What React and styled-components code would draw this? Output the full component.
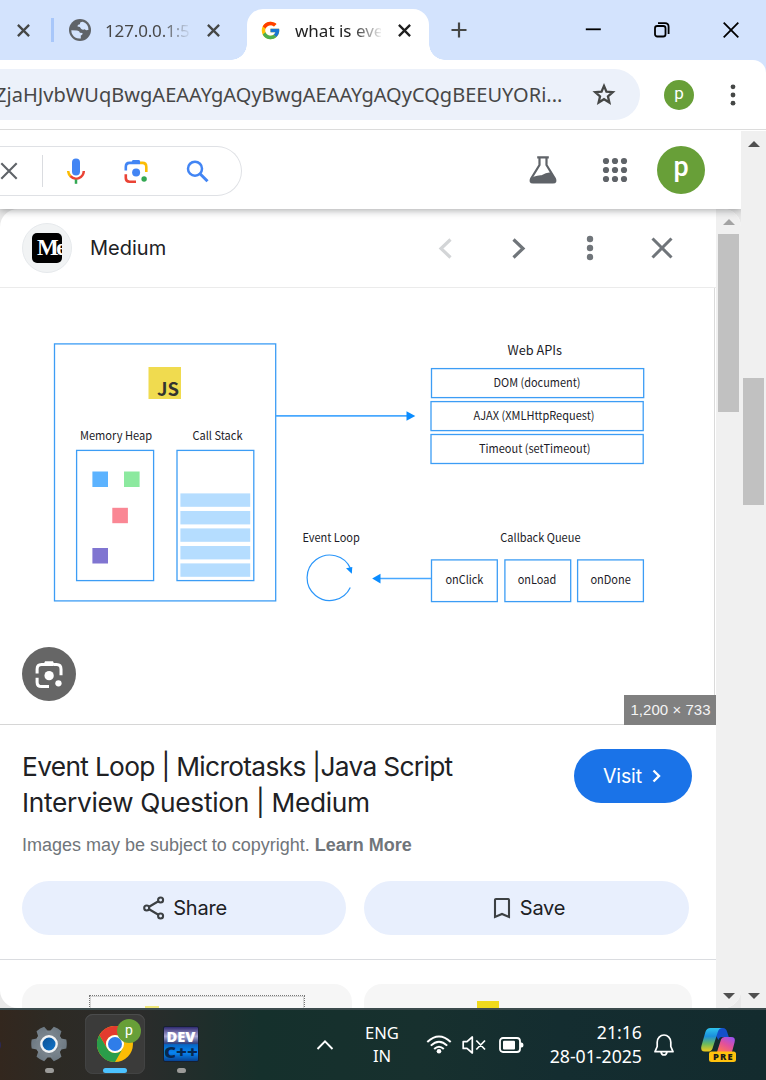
import React from "react";
import styled, { createGlobalStyle } from "styled-components";
import { FcGoogle } from "react-icons/fc";

const ui = '"Noto Sans", "Open Sans", sans-serif';
const product = 'Inter, Roboto, sans-serif';
const arial = '"Liberation Sans", Arial, sans-serif';

const Global = createGlobalStyle`
  * { box-sizing: border-box; }
  body { margin: 0; overflow: hidden; background: #fff; }
  svg { display: block; flex: none; }
`;

const Screen = styled.div`
  display: flex;
  flex-direction: column;
  width: 766px;
  height: 1080px;
  overflow: hidden;
  background: #fff;
`;

/* Label: one line of text */
const Label = styled.span`
  display: block;
  flex: none;
  white-space: pre;
  font-family: ${(p) => p.$font || ui};
  font-size: ${(p) => p.$size}px;
  line-height: ${(p) => p.$line || 24}px;
  letter-spacing: ${(p) => p.$track || 0}px;
  font-weight: ${(p) => p.$weight || 400};
  color: ${(p) => p.$color || "#202124"};
`;

const IconSlot = styled.div`
  display: flex;
  flex: none;
  margin-left: ${(p) => p.$left}px;
`;

/* Browser tabs */
const TabStrip = styled.div`
  display: flex;
  flex: none;
  align-items: flex-end;
  height: 60px;
  background: #d3e3fd;
`;
const IdleTabs = styled.div`
  display: flex;
  align-items: center;
  width: 247px;
  height: 60px;
  padding-left: 16px;
`;
const TabDivider = styled.div`
  width: 3px;
  height: 24px;
  margin: 0 15px 0 20px;
  background: #a8c7fa;
`;
const TabTitle = styled(Label)`
  width: ${(p) => p.$w}px;
  margin-left: 14px;
  margin-right: ${(p) => p.$after}px;
  padding-top: 2px;
  -webkit-mask-image: linear-gradient(to right, #000 66%, transparent 103%);
  mask-image: linear-gradient(to right, #000 66%, transparent 103%);
`;
const ActiveTab = styled.div`
  position: relative;
  display: flex;
  align-items: center;
  width: 182px;
  height: 51px;
  padding: 0 0 9px 13px;
  background: #fff;
  border-radius: 16px 16px 0 0;
  &::before, &::after {
    content: "";
    position: absolute;
    bottom: 0;
    width: 16px;
    height: 16px;
  }
  &::before { left: -16px; background: radial-gradient(circle at 0 0, transparent 15.5px, #fff 16px); }
  &::after { right: -16px; background: radial-gradient(circle at 100% 0, transparent 15.5px, #fff 16px); }
`;
const WindowControls = styled.div`
  display: flex;
  align-items: center;
  flex: 1;
  height: 60px;
  padding: 0 27px 0 22px;
`;
const ControlGroup = styled.div`
  display: flex;
  gap: 53px;
  margin-left: auto;
`;

/* Address bar */
const ToolbarBack = styled.div`
  flex: none;
  height: 71px;
  background: #d3e3fd;
`;
const Toolbar = styled.div`
  display: flex;
  align-items: center;
  height: 71px;
  padding-bottom: 2px;
  background: #fff;
  border-radius: 0 13px 0 0;
  box-shadow: inset 0 -1px 0 #fff, inset 0 -2px 0 #dcdcdc;
`;
const Omnibox = styled.div`
  display: flex;
  align-items: center;
  width: 640px;
  height: 51px;
  overflow: hidden;
  background: #ecf1fa;
  border-radius: 0 26px 26px 0;
`;
const UrlText = styled(Label)`
  width: 591px;
  margin-left: -5px;
  margin-right: 4px;
`;
const Avatar = styled.div`
  display: flex;
  justify-content: center;
  flex: none;
  width: ${(p) => p.$d}px;
  height: ${(p) => p.$d}px;
  border-radius: 50%;
  background: #689f38;
  color: #fff;
  font: ${(p) => p.$weight} ${(p) => p.$size}px/${(p) => p.$line}px Roboto, sans-serif;
`;
const ToolbarAvatar = styled(Avatar)`
  margin: 0 36px 0 24px;
`;

/* Page */
const Viewport = styled.div`
  display: flex;
  flex: none;
  height: 877px;
`;
const Page = styled.div`
  display: flex;
  flex-direction: column;
  width: 741px;
`;
const SearchHeader = styled.header`
  position: relative;
  z-index: 1;
  flex: none;
  display: flex;
  align-items: center;
  height: 78px;
  background: #fff;
  box-shadow: 0 1px 8px rgba(32, 33, 36, 0.42);
  clip-path: inset(0 0 -16px 0);
`;
const SearchPill = styled.div`
  display: flex;
  align-items: center;
  width: 242px;
  height: 50px;
  margin-top: 2px;
  border: 1px solid #dfe1e5;
  border-left: 0;
  border-radius: 0 25px 25px 0;
  background: #fff;
`;
const PillDivider = styled.div`
  width: 1px;
  height: 32px;
  margin: 0 24px 0 24px;
  background: #dadce0;
`;
const HeaderActions = styled.div`
  display: flex;
  align-items: center;
  gap: 45px;
  margin-left: auto;
  margin-right: 36px;
`;
const HeaderAvatar = styled(Avatar)`
  margin-left: -16px;
`;

const PanelBack = styled.div`
  flex: none;
  height: 799px;
  background: #e8e8e8;
`;
const Panel = styled.section`
  display: flex;
  height: 799px;
  overflow: hidden;
  border-radius: 18px;
  background: #fff;
`;
const PanelBody = styled.div`
  display: flex;
  flex-direction: column;
  width: 716px;
`;
const PanelHeader = styled.div`
  display: flex;
  flex: none;
  align-items: center;
  height: 79px;
  padding: 0 43px 0 22px;
  border-bottom: 1px solid #ebebeb;
`;
const SiteBadge = styled.div`
  display: flex;
  align-items: center;
  justify-content: center;
  width: 50px;
  height: 50px;
  margin-right: 18px;
  border: 1px solid #e6e9ec;
  border-radius: 50%;
  background: #f1f3f4;
`;
const MediumLogo = styled.div`
  width: 30px;
  height: 30px;
  overflow: hidden;
  padding-left: 5px;
  border-radius: 5px;
  background: #000;
  color: #fff;
  font: bold 23px/30px "Liberation Serif", serif;
  letter-spacing: -2.5px;
`;
const PanelActions = styled.div`
  display: flex;
  align-items: center;
  gap: 48px;
  margin-left: auto;
`;
const Preview = styled.div`
  position: relative;
  flex: none;
  width: 716px;
  height: 437px;
  border-right: 1px solid #fff;
  border-bottom: 1px solid #d6d6d6;
  box-shadow: inset -1px 0 0 #dadada;
`;
const LensButton = styled.div`
  position: absolute;
  left: 22px;
  bottom: 23px;
  display: flex;
  align-items: center;
  justify-content: center;
  width: 54px;
  height: 54px;
  border-radius: 50%;
  background: #666;
`;
const SizeBadge = styled.div`
  position: absolute;
  right: -1px;
  bottom: -1px;
  width: 92px;
  height: 30px;
  padding-left: 1px;
  background: #808080;
  color: #f4f4f4;
  text-align: center;
  font: 15px/30px ${arial};
  letter-spacing: 0.05px;
`;
const Summary = styled.div`
  display: flex;
  flex: none;
  justify-content: space-between;
  height: 103px;
  padding: 24px 24px 0 22px;
`;
const Title = styled.h1`
  margin: 0;
  font-weight: 400;
`;
const Visit = styled.div`
  display: flex;
  align-items: center;
  justify-content: center;
  gap: 10px;
  width: 118px;
  height: 54px;
  padding-right: 1px;
  border-radius: 27px;
  background: #1a73e8;
`;
const Notice = styled.p`
  flex: none;
  margin: 0;
  height: 53px;
  padding: 4px 0 0 22px;
  color: #70757a;
  font: 18px/26px ${arial};
  letter-spacing: -0.01px;
  white-space: pre;
`;
const Buttons = styled.div`
  display: flex;
  flex: none;
  gap: 18px;
  height: 79px;
  padding: 0 22px;
  border-bottom: 1px solid #dadce0;
`;
const PillButton = styled.div`
  display: flex;
  align-items: center;
  justify-content: center;
  gap: ${(p) => p.$gap}px;
  width: ${(p) => p.$w}px;
  height: 54px;
  padding-left: ${(p) => p.$shift}px;
  border-radius: 27px;
  background: #e8effd;
`;
const Cards = styled.div`
  display: flex;
  gap: 12px;
  height: 48px;
  overflow: hidden;
  padding: 24px 22px 0;
`;
const Card = styled.div`
  width: ${(p) => p.$w}px;
  height: 60px;
  border-radius: 18px 18px 0 0;
  background: #f6f6f6;
  padding: ${(p) => p.$pad};
`;
const Thumb = styled.div`
  width: 216px;
  height: 40px;
  padding: 10px 0 0 55px;
  border: 1px dotted #777;
  outline: 1px solid #d5d5d5;
  outline-offset: -2px;
  background: #f8f8f8;
`;
const Yellow = styled.div`
  width: ${(p) => p.$w}px;
  height: 20px;
  background: ${(p) => p.$c};
`;

const Track = styled.div`
  display: flex;
  flex-direction: column;
  align-items: center;
  flex: none;
  width: 25px;
  height: ${(p) => p.$h}px;
  background: #f0f0f0;
`;
const ScrollThumb = styled.div`
  width: 21px;
  height: ${(p) => p.$h}px;
  margin-top: ${(p) => p.$top}px;
  background: #c1c1c1;
`;
const Arrow = styled.div`
  width: 0;
  height: 0;
  margin: ${(p) => (p.$down ? "auto 0 9px" : `${p.$top}px 0 0`)};
  border: 6px solid transparent;
  border-${(p) => (p.$down ? "top" : "bottom")}-color: ${(p) => p.$color || "#505050"};
  border-${(p) => (p.$down ? "bottom" : "top")}-width: 0;
`;

/* Taskbar */
const Taskbar = styled.footer`
  display: flex;
  flex: none;
  height: 72px;
  border-top: 2px solid #3c4b4d;
  background: linear-gradient(90deg, #33271e 0, #2d2a24 50px, #2b2c2b 140px, #1e2e2b 210px, #15302c 260px, #17302e 420px, #142d30 560px, #132b2e 766px);
`;
const Apps = styled.div`
  display: flex;
  align-items: flex-start;
  padding: 4px 0 0;
  gap: 6px;
`;
const HiddenApp = styled.div`
  width: 13px;
  height: 14px;
  margin: 24px 0 0 -12px;
  border-radius: 50%;
  background: #2c2955;
`;
const AppTile = styled.div`
  position: relative;
  display: flex;
  flex-direction: column;
  align-items: center;
  justify-content: space-between;
  width: 60px;
  height: 60px;
  margin-left: ${(p) => p.$left || 0}px;
  padding: 12px 0 1px;
  border-radius: 8px;
  background: ${(p) => (p.$on ? "#3b3b3a" : "transparent")};
  box-shadow: ${(p) => (p.$on ? "inset 0 1px 0 #4b4c4c, inset 0 0 0 1px #424343" : "none")};
`;
const Running = styled.div`
  width: ${(p) => (p.$on ? 24 : 9)}px;
  height: 5px;
  border-radius: 3px;
  background: ${(p) => (p.$on ? "#4cc2ff" : "#9b9b99")};
`;
const ProfileBadge = styled(Avatar)`
  position: absolute;
  left: 32px;
  top: 5px;
`;
const Tray = styled.div`
  display: flex;
  align-items: center;
  margin-left: auto;
  padding-right: 30px;
`;
const Lines = styled.div`
  display: flex;
  flex-direction: column;
  align-items: ${(p) => p.$align};
  width: ${(p) => p.$w}px;
  margin: 0 ${(p) => p.$right}px 2px ${(p) => p.$left}px;
`;

const Cross = ({ box, r, stroke, color }) => (
  <svg width={box} height={box} viewBox={`${-box / 2} ${-box / 2} ${box} ${box}`}>
    <path d={`M${-r} ${-r}L${r} ${r}M${r} ${-r}L${-r} ${r}`} stroke={color} strokeWidth={stroke} fill="none" />
  </svg>
);

const Dots = ({ r, step, color, cols = 1, w, h }) => (
  <svg width={w} height={h} viewBox={`${-w / 2} ${-h / 2} ${w} ${h}`} fill={color}>
    {(cols === 1 ? [0] : [-1, 0, 1]).map((x) =>
      [-1, 0, 1].map((y) => <circle key={`${x}${y}`} cx={x * step} cy={y * step} r={r} />)
    )}
  </svg>
);

const Star = () => (
  <svg width="28" height="28" viewBox="0 0 24 24">
    <path
      d="M12 4.2 14.1 9.1 19.5 9.6 15.4 13.2 16.6 18.4 12 15.6 7.4 18.4 8.6 13.2 4.5 9.6 9.9 9.1Z"
      fill="none"
      stroke="#454746"
      strokeWidth="2"
    />
  </svg>
);

const Globe = () => (
  <svg width="22" height="22" viewBox="0 0 22 22">
    <circle cx="11" cy="11" r="11" fill="#5f6368" />
    <path
      d="M2.3 11.2 8 11.6Q10.8 12 10.9 13.8L13.6 14Q13.7 16.3 11.8 16.6V19.4Q5.8 20 3.4 15.6Q2.3 13.6 2.3 11.2ZM13.8 2.8Q10.7 2.8 11 5.2Q8.3 5.5 8.5 7.5Q11.5 7.5 12 9.7Q13.7 11.2 15.7 10.3Q17.2 11.8 19.5 10.8Q19.5 5 13.8 2.8Z"
      fill="#d3e3fd"
    />
  </svg>
);

const Mic = () => (
  <svg width="18" height="26" viewBox="0 0 18 26" fill="none">
    <rect x="5" y="0.5" width="8" height="17" rx="4" fill="#4285f4" />
    <path d="M1.2 13A7.8 7.8 0 0 0 3.6 18.4" stroke="#fbbc04" strokeWidth="2.5" />
    <path d="M3.4 18.2A7.8 7.8 0 0 0 16.8 13" stroke="#ea4335" strokeWidth="2.5" />
    <path d="M9 21.5V25.8" stroke="#34a853" strokeWidth="2.5" />
  </svg>
);

const Lens = ({ size, colors }) => {
  const [blue, yellow, red, green] = colors;
  return (
    <svg width={size} height={size} viewBox="0 0 24 24" fill="none" strokeWidth="2.6">
      <path d="M1.8 11.5V8Q1.8 3.9 5.6 3.9H16" stroke={blue} />
      <path d="M7 4.5 8.6 1H15.4L17 4.5Z" fill={blue} />
      <path d="M16 3.9H18.5Q22.3 3.9 22.3 8V13" stroke={yellow} />
      <path d="M1.8 15.2V19Q1.8 22.7 5.6 22.7H12" stroke={red} />
      <circle cx="12.1" cy="13.4" r="4" fill={blue} />
      <circle cx="20.1" cy="20" r="2.7" fill={green} />
    </svg>
  );
};

const Chevron = ({ w, h, color, stroke, dir }) => (
  <svg width={w} height={h} viewBox={`0 0 ${w} ${h}`}>
    <path
      d={dir === "left" ? `M${w - 1.5} 1.5L3 ${h / 2}L${w - 1.5} ${h - 1.5}` : `M1.5 1.5L${w - 3} ${h / 2}L1.5 ${h - 1.5}`}
      fill="none"
      stroke={color}
      strokeWidth={stroke}
    />
  </svg>
);

const Flask = () => (
  <svg width="28" height="28" viewBox="0 0 28 28">
    <path d="M8.2 1.4H19.8M10.5 1V9L2.2 22.5Q0.4 26.5 4 26.5H24Q27.6 26.5 25.8 22.5L17.5 9V1" fill="none" stroke="#5f6368" strokeWidth="2.2" />
    <path d="M4.5 20.8Q9 19 12.5 19.3Q16.5 16.5 21.5 16.2L26.2 23.2Q27 26.5 24 26.5H4Q1.2 26 2 23.2Z" fill="#5f6368" />
  </svg>
);

const Box = ({ x, y, w, h }) => <rect x={x} y={y} width={w} height={h} fill="none" stroke="#3c9df5" strokeWidth="1.3" />;
const Note = ({ x, y, w, size = 11.6, children }) => (
  <text x={x} y={y} textLength={w} lengthAdjust="spacingAndGlyphs" fontSize={size} fill="#1c1c28">
    {children}
  </text>
);

const Diagram = () => (
  <svg width="714" height="436" viewBox="0 288 714 436" fontFamily='"Noto Sans CJK SC", sans-serif'>
    <Box x={54.5} y={343.9} w={221.2} h={257} />
    <rect x="148.5" y="367" width="32.5" height="32" fill="#f0db4f" />
    <text x="157" y="396" fontWeight="700" fontSize="18.5" textLength="22" lengthAdjust="spacingAndGlyphs" fill="#323330">JS</text>
    <Note x={80} y={439.5} w={72}>Memory Heap</Note>
    <Note x={192.5} y={439.5} w={50}>Call Stack</Note>
    <Box x={76.6} y={450.4} w={77} h={130.2} />
    <Box x={177} y={450.4} w={76.8} h={130.2} />
    <rect x="92.4" y="471.5" width="15.6" height="15.5" fill="#5cb3ff" />
    <rect x="124" y="471.5" width="15.6" height="15.5" fill="#8ce99f" />
    <rect x="112.3" y="507.8" width="15.6" height="15.4" fill="#fa8794" />
    <rect x="92.4" y="548" width="15.6" height="15.5" fill="#8075d1" />
    {[493.4, 511, 528.4, 546, 563.4].map((y) => (
      <rect key={y} x="180.4" y={y} width="69.8" height="13.4" fill="#b5ddff" />
    ))}
    <path d="M276 415.9H407" stroke="#48a8ff" strokeWidth="1.7" />
    <path d="M406.5 411.2 415.3 416 406.5 420.8Z" fill="#0a8cff" />
    <Note x={507.5} y={355.3} w={54.5} size={12.6}>Web APIs</Note>
    <Box x={431.5} y={368.6} w={212.2} h={29} />
    <Box x={431} y={401.6} w={212.2} h={29} />
    <Box x={431} y={434.5} w={212.2} h={29} />
    <Note x={493.5} y={387.3} w={87}>DOM (document)</Note>
    <Note x={473.5} y={420.2} w={121}>AJAX (XMLHttpRequest)</Note>
    <Note x={479} y={453.2} w={111.5}>Timeout (setTimeout)</Note>
    <Note x={302.4} y={542.3} w={57.4}>Event Loop</Note>
    <path d="M350.5 568.5A22.7 22.7 0 1 0 350.3 587.5" fill="none" stroke="#2a96fa" strokeWidth="1.2" />
    <path d="M346 568.3 352.3 567 351.8 573.8Z" fill="#0a8cff" />
    <path d="M379 578.5H431" stroke="#48a8ff" strokeWidth="1.3" />
    <path d="M380.5 573.8 372.2 578.6 380.5 583.5Z" fill="#0a8cff" />
    <Note x={500.3} y={542.2} w={80.2}>Callback Queue</Note>
    <Box x={431.5} y={559.9} w={65.8} h={41.7} />
    <Box x={504.9} y={559.9} w={65.8} h={41.7} />
    <Box x={577.6} y={559.9} w={65.8} h={41.7} />
    <Note x={445.4} y={584.2} w={38}>onClick</Note>
    <Note x={517.7} y={584.2} w={38.5}>onLoad</Note>
    <Note x={590.4} y={584.2} w={40.5}>onDone</Note>
  </svg>
);

const Gear = () => (
  <svg width="36" height="36" viewBox="-18 -18 36 36">
    <defs>
      <linearGradient id="steel" x1="0" y1="0" x2="1" y2="1">
        <stop offset="0" stopColor="#7f8991" />
        <stop offset="1" stopColor="#69757f" />
      </linearGradient>
      <linearGradient id="hub" x1="0" y1="0" x2="1" y2="1">
        <stop offset="0" stopColor="#0c4f8f" />
        <stop offset="1" stopColor="#1177cf" />
      </linearGradient>
    </defs>
    <g fill="url(#steel)">
      <circle r="13.5" />
      {[0, 60, 120, 180, 240, 300].map((a) => (
        <path key={a} transform={`rotate(${a})`} d="M9 -9.5 12.2 -5.5 17.3 -4.4Q18.2 0 17.3 4.4L12.2 5.5 9 9.5Z" />
      ))}
    </g>
    <circle r="7.7" fill="url(#hub)" stroke="#f1f3f4" strokeWidth="2.4" />
  </svg>
);

const Chrome = () => (
  <svg width="36" height="36" viewBox="-18 -18 36 36">
    <circle r="18" fill="#fbbc05" />
    <path d="M-15.6 -9A18 18 0 0 0 0 18L7.8 4.5A9 9 0 0 1 -7.8 4.5Z" fill="#2a9d4a" />
    <path d="M-15.6 -9A18 18 0 0 1 15.6 -9H0A9 9 0 0 0 -7.8 4.5Z" fill="#e33b2e" />
    <circle r="9" fill="#fff" />
    <circle r="7" fill="#2f7de9" />
  </svg>
);

const DevCpp = () => (
  <svg width="36" height="36" viewBox="0 0 36 36" fontFamily='"Open Sans", sans-serif' fontWeight="800">
    <defs>
      <linearGradient id="dev" x1="0" y1="0" x2="0" y2="1">
        <stop offset="0" stopColor="#28236b" />
        <stop offset="0.28" stopColor="#aaa7d4" />
        <stop offset="0.48" stopColor="#33427f" />
        <stop offset="0.52" stopColor="#0767c4" />
        <stop offset="0.75" stopColor="#0785f2" />
        <stop offset="1" stopColor="#073f8d" />
      </linearGradient>
    </defs>
    <rect x="0.5" y="0.5" width="35" height="35" rx="1.5" fill="url(#dev)" stroke="#17202f" />
    <text x="3.5" y="16" fontSize="14" textLength="29" lengthAdjust="spacingAndGlyphs" fill="#fff">DEV</text>
    <text x="1" y="31.5" fontSize="15" textLength="34" lengthAdjust="spacingAndGlyphs" fill="#07284f">C++</text>
  </svg>
);

const Wifi = () => (
  <svg width="26" height="20" viewBox="0 0 26 20" fill="none" stroke="#fff" strokeWidth="2">
    <path d="M1.3 7Q13 -4 24.7 7M4.8 10.6Q13 2.8 21.2 10.6M8.2 14Q13 9.4 17.8 14" />
    <circle cx="13" cy="16.3" r="2.3" fill="#fff" stroke="none" />
  </svg>
);
const Muted = () => (
  <svg width="24" height="20" viewBox="0 0 24 20" fill="none" stroke="#fff" strokeWidth="1.7" strokeLinejoin="round">
    <path d="M1.2 6.6H5L10.3 2V18L5 13.4H1.2ZM14.3 5.5 23 14.5M23 5.5 14.3 14.5" />
  </svg>
);
const Battery = () => (
  <svg width="25" height="18" viewBox="0 0 25 18">
    <rect x="1" y="2" width="20" height="14" rx="3" fill="none" stroke="#fff" strokeWidth="1.8" />
    <rect x="4" y="4.7" width="12" height="8.8" rx="1" fill="#fff" />
    <path d="M21 6.5H22.5Q24.5 6.5 24.5 9T22.5 11.5H21Z" fill="#fff" />
  </svg>
);
const Bell = () => (
  <svg width="20" height="24" viewBox="0 0 20 24" fill="none" stroke="#fff" strokeWidth="1.7" strokeLinejoin="round">
    <path d="M3.2 9.2A6.8 7.2 0 0 1 16.8 9.2V13.5L19 18.7H1L3.2 13.5ZM7 19Q7.5 22 10 22T13 19" />
  </svg>
);
const Copilot = () => (
  <svg width="36" height="36" viewBox="0 0 36 36">
    <defs>
      <linearGradient id="cl" x1="0" y1="0" x2="0" y2="1">
        <stop offset="0" stopColor="#2fc3ee" />
        <stop offset="0.35" stopColor="#1b8fdc" />
        <stop offset="0.68" stopColor="#6dba5c" />
        <stop offset="1" stopColor="#f4ca19" />
      </linearGradient>
      <linearGradient id="cr" x1="0.8" y1="0" x2="0.2" y2="1">
        <stop offset="0" stopColor="#9c52ee" />
        <stop offset="0.5" stopColor="#e2509b" />
        <stop offset="1" stopColor="#ff7653" />
      </linearGradient>
    </defs>
    <path d="M15 1H23Q26 1 27 4.5L28.8 10H22Q19.3 10 18.4 13L15 7Z" fill="#1450c9" />
    <path d="M10.5 1H22.5Q19 1 17.8 5L12.5 21.5Q11.6 24.6 8 24.6H5Q0 24.6 1.4 19L5.4 5Q6.6 1 10.5 1Z" fill="url(#cl)" />
    <path d="M24.5 10H31Q36 10 34.6 15.2L32 25H17L21 12.5Q21.8 10 24.5 10Z" fill="url(#cr)" />
    <rect x="9" y="24.5" width="27" height="10.5" rx="2.5" fill="#ffc20e" />
    <text x="13" y="33" fontFamily='"Open Sans", sans-serif' fontWeight="800" fontSize="9.3" textLength="19.5" fill="#1a1a1a">PRE</text>
  </svg>
);

export default function App() {
  return (
    <Screen>
      <Global />
      <TabStrip>
        <IdleTabs>
          <Cross box={15} r={5.6} stroke={2.3} color="#454746" />
          <TabDivider />
          <Globe />
          <TabTitle $size={17} $track={-0.15} $w={84} $after={17} $color="#474747">127.0.0.1:5</TabTitle>
          <Cross box={15} r={5.6} stroke={2.3} color="#454746" />
        </IdleTabs>
        <ActiveTab>
          <FcGoogle size={21} />
          <TabTitle $size={17} $w={86} $after={16} $color="#1f1f1f">what is eve</TabTitle>
          <Cross box={15} r={5.6} stroke={2.3} color="#1f1f1f" />
        </ActiveTab>
        <WindowControls>
          <svg width="16" height="16" viewBox="0 0 16 16">
            <path d="M8 0.5V15.5M0.5 8H15.5" stroke="#454746" strokeWidth="2.2" />
          </svg>
          <ControlGroup>
            <svg width="16" height="16" viewBox="0 0 16 16"><path d="M0.8 7.3H15.8" stroke="#000" strokeWidth="1.8" /></svg>
            <svg width="16" height="16" viewBox="0 0 16 16" fill="none" stroke="#000" strokeWidth="1.8">
              <rect x="1" y="4" width="10.5" height="10.5" rx="2.3" />
              <path d="M4 1.2H11Q14.6 1.2 14.6 4.8V12" />
            </svg>
            <Cross box={16} r={7.3} stroke={1.8} color="#000" />
          </ControlGroup>
        </WindowControls>
      </TabStrip>

      <ToolbarBack>
        <Toolbar>
          <Omnibox>
            <UrlText $size={20} $track={0.02} $color="#474747">ZjaHJvbWUqBwgAEAAYgAQyBwgAEAAYgAQyCQgBEEUYORi...</UrlText>
            <Star />
          </Omnibox>
          <ToolbarAvatar $d={30} $size={17} $line={27} $weight={400}>p</ToolbarAvatar>
          <Dots r={2.4} step={8.2} w={6} h={24} color="#454746" />
        </Toolbar>
      </ToolbarBack>

      <Viewport>
        <Page>
          <SearchHeader>
            <SearchPill>
              <Cross box={18} r={7.7} stroke={2.1} color="#5f6368" />
              <PillDivider />
              <Mic />
              <IconSlot $left={39}><Lens size={24} colors={["#4285f4", "#fbbc04", "#ea4335", "#34a853"]} /></IconSlot>
              <IconSlot $left={38}>
                <svg width="23" height="23" viewBox="0 0 23 23" fill="none" stroke="#4285f4">
                  <circle cx="9" cy="8.7" r="7" strokeWidth="2.5" />
                  <path d="M14 13.7 21.5 21.2" strokeWidth="3" />
                </svg>
              </IconSlot>
            </SearchPill>
            <HeaderActions>
              <Flask />
              <Dots r={3.1} step={9} cols={3} w={26} h={26} color="#5f6368" />
              <HeaderAvatar $d={48} $size={27} $line={43} $weight={500}>p</HeaderAvatar>
            </HeaderActions>
          </SearchHeader>

          <PanelBack>
            <Panel>
              <PanelBody>
                <PanelHeader>
                  <SiteBadge><MediumLogo>Me</MediumLogo></SiteBadge>
                  <Label $font={product} $size={20}>Medium</Label>
                  <PanelActions>
                    <Chevron w={14} h={21} stroke={3.2} dir="left" color="#d3d5d7" />
                    <IconSlot $left={12}><Chevron w={14} h={21} stroke={3.2} dir="right" color="#70757a" /></IconSlot>
                    <IconSlot $left={12}><Dots r={3.2} step={9} w={8} h={26} color="#70757a" /></IconSlot>
                    <IconSlot $left={9}><Cross box={22} r={9.5} stroke={3} color="#70757a" /></IconSlot>
                  </PanelActions>
                </PanelHeader>
                <Preview>
                  <Diagram />
                  <LensButton><Lens size={28} colors={["#fff", "#fff", "#fff", "#fff"]} /></LensButton>
                  <SizeBadge>1,200 × 733</SizeBadge>
                </Preview>
                <Summary>
                  <Title>
                    <Label $font={product} $size={26.3} $line={36} $track={-0.67}>Event Loop | Microtasks |Java Script</Label>
                    <Label $font={product} $size={26.3} $line={36} $track={-0.32}>Interview Question | Medium</Label>
                  </Title>
                  <Visit>
                    <Label $font={product} $size={19.5} $color="#fff" $track={-0.1}>Visit</Label>
                    <Chevron w={10} h={14} stroke={2.4} dir="right" color="#fff" />
                  </Visit>
                </Summary>
                <Notice>Images may be subject to copyright. <b>Learn More</b></Notice>
                <Buttons>
                  <PillButton $w={324} $shift={2} $gap={8}>
                    <svg width="22" height="24" viewBox="0 0 22 24" fill="none" stroke="#3c4043" strokeWidth="2.1">
                      <path d="M4 12 17.5 4M4 12 17.5 20" />
                      <circle cx="3.7" cy="12" r="2.5" fill="#e8effd" />
                      <circle cx="17.6" cy="4" r="2.5" fill="#e8effd" />
                      <circle cx="17.6" cy="20" r="2.5" fill="#e8effd" />
                    </svg>
                    <Label $font={product} $size={20} $track={-0.2}>Share</Label>
                  </PillButton>
                  <PillButton $w={325} $shift={5} $gap={9}>
                    <svg width="18" height="24" viewBox="0 0 18 24" fill="none" stroke="#3c4043" strokeWidth="2.1">
                      <path d="M2 21V4Q2 3 3 3H15Q16 3 16 4V21L9 18Z" />
                    </svg>
                    <Label $font={product} $size={20} $track={-0.2}>Save</Label>
                  </PillButton>
                </Buttons>
                <Cards>
                  <Card $w={330} $pad="11px 0 0 67px"><Thumb><Yellow $w={14} $c="#efe77a" /></Thumb></Card>
                  <Card $w={328} $pad="17px 0 0 113px"><Yellow $w={22} $c="#f0da1d" /></Card>
                </Cards>
              </PanelBody>
              <Track $h={799}>
                <Arrow $top={10} $color="#a3a3a3" />
                <ScrollThumb $top={9} $h={178} />
                <Arrow $down />
              </Track>
            </Panel>
          </PanelBack>
        </Page>
        <Track $h={877}>
          <Arrow $top={10} />
          <ScrollThumb $top={231} $h={127} />
          <Arrow $down />
        </Track>
      </Viewport>

      <Taskbar>
        <Apps>
          <HiddenApp />
          <AppTile $left={12}><Gear /><Running /></AppTile>
          <AppTile $on><Chrome /><ProfileBadge $d={24} $size={14} $line={22} $weight={400}>p</ProfileBadge><Running $on /></AppTile>
          <AppTile><DevCpp /><Running /></AppTile>
        </Apps>
        <Tray>
          <svg width="18" height="12" viewBox="0 0 18 12"><path d="M1.5 10 9 2.3 16.5 10" fill="none" stroke="#fff" strokeWidth="1.9" /></svg>
          <Lines $w={38} $left={29} $right={25} $align="center">
            <Label $size={16.6} $line={23} $color="#fff">ENG</Label>
            <Label $size={16.6} $line={23} $color="#fff">IN</Label>
          </Lines>
          <Wifi />
          <IconSlot $left={10}><Muted /></IconSlot>
          <IconSlot $left={13}><Battery /></IconSlot>
          <Lines $w={94} $left={24} $right={12} $align="flex-end">
            <Label $size={17.7} $line={24} $color="#fff">21:16</Label>
            <Label $size={17.7} $line={24} $color="#fff">28-01-2025</Label>
          </Lines>
          <Bell />
          <IconSlot $left={26}><Copilot /></IconSlot>
        </Tray>
      </Taskbar>
    </Screen>
  );
}
